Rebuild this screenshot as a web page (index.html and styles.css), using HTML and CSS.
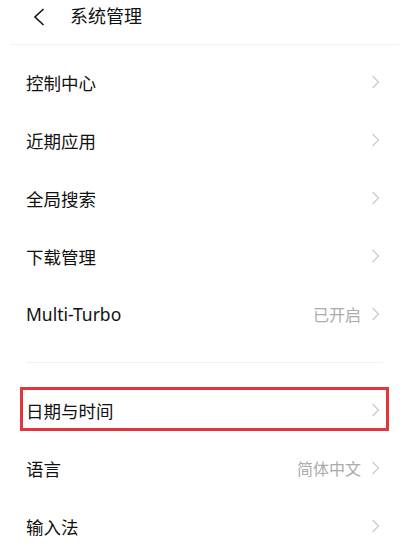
FILE: index.html
```html
<!DOCTYPE html>
<html lang="zh">
<head>
	<meta charset="utf-8" />
	<title>系统管理</title>
	<link rel="stylesheet" href="styles.css">
</head>
<body>
	<div class="header">
		<span class="back">
			<svg width="12" height="18" viewBox="0 0 12 18"><path d="M10.5 1 L2 9 L10.5 17" fill="none" stroke="#1a1a1a" stroke-width="1.7"/></svg>
		</span>
		<span class="title">系统管理</span>
	</div>
	<div class="list">
		<div class="row"><span class="name">控制中心</span><span class="arrow"></span></div>
		<div class="row"><span class="name">近期应用</span><span class="arrow"></span></div>
		<div class="row"><span class="name">全局搜索</span><span class="arrow"></span></div>
		<div class="row"><span class="name">下载管理</span><span class="arrow"></span></div>
		<div class="row"><span class="name">Multi-Turbo</span><span class="value">已开启</span><span class="arrow"></span></div>
	</div>
	<div class="divider"></div>
	<div class="list">
		<div class="row marked"><span class="name">日期与时间</span><span class="arrow"></span></div>
		<div class="row"><span class="name">语言</span><span class="value">简体中文</span><span class="arrow"></span></div>
		<div class="row"><span class="name">输入法</span><span class="arrow"></span></div>
	</div>
</body>
</html>
```

FILE: styles.css
```css
html {
	background-color: #fff;
	font-family: "Noto Sans", "Noto Sans CJK SC", sans-serif;
	color: #111;
}

body {
	margin: 0;
	padding: 0;
	overflow: hidden;
}

.header {
	height: 45px;
	margin: 0 10px;
	border-bottom: 1px solid #f2f2f2;
	display: flex;
	align-items: flex-start;
	padding: 7px 0 0 23px;
	box-sizing: border-box;
}

.back {
	display: flex;
	width: 37px;
	padding-top: 1px;
}

.title {
	font-size: 18px;
	line-height: 18px;
}

.list {
	padding-top: 8px;
}

.divider + .list {
	padding-top: 0;
}

.row {
	position: relative;
	height: 58px;
	display: flex;
	align-items: center;
	padding: 0 29px 0 26px;
}

.name {
	flex: 1;
	font-size: 17.5px;
}

.value {
	font-size: 16px;
	color: #ababab;
	margin-right: 10px;
}

.arrow {
	width: 9px;
	height: 14px;
	background: url("data:image/svg+xml,%3Csvg xmlns='http://www.w3.org/2000/svg' width='9' height='14' viewBox='0 0 9 14'%3E%3Cpath d='M1.5 1 L7.5 7 L1.5 13' fill='none' stroke='%23cdcdcd' stroke-width='1.4'/%3E%3C/svg%3E") no-repeat;
}

.divider {
	height: 1px;
	margin: 19px 26px 18px 26px;
	background-color: #f2f2f2;
}

/* annotation box */
.marked::after {
	content: "";
	position: absolute;
	top: 6px;
	bottom: 8px;
	left: 20px;
	right: 20px;
	border: 3px solid #e2363c;
}
```
